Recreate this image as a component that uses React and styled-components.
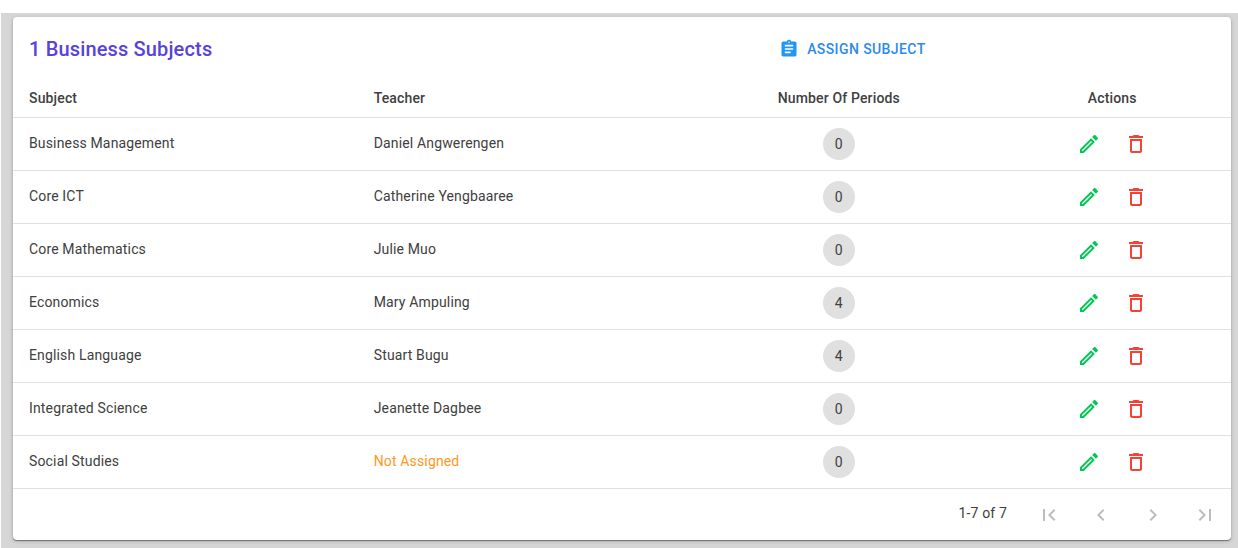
import React from "react";
import styled, { createGlobalStyle } from "styled-components";
import {
  MdAssignment,
  MdChevronLeft,
  MdChevronRight,
  MdDeleteOutline,
  MdFirstPage,
  MdLastPage,
  MdOutlineEdit,
} from "react-icons/md";

const GlobalStyle = createGlobalStyle`
  * {
    box-sizing: border-box;
  }
  body {
    margin: 0;
    background-color: #fff;
    color: #404040;
    font-family: Roboto, "Liberation Sans", sans-serif;
    font-size: 14px;
    line-height: 20px;
    letter-spacing: 0.01071em;
  }
`;

const Page = styled.main`
  margin: 13px 0 0 1px;
  padding: 4px 7px 8px 12px;
  background-color: #d6d6d6;
`;
const Card = styled.section`
  border-radius: 4px;
  background-color: #fff;
  box-shadow: 0 1px 1px rgba(0, 0, 0, 0.4), 0 1px 4px rgba(0, 0, 0, 0.2);
`;
const Header = styled.header`
  display: grid;
  grid-template-columns: 13fr 8fr;
  align-items: center;
  height: 63px;
  padding: 0 16px;
`;
const Title = styled.h1`
  margin: 0;
  color: #5742dc;
  font-size: 20px;
  font-weight: 500;
  line-height: 32px;
  letter-spacing: 0.0075em;
`;
const Button = styled.button`
  display: flex;
  align-items: center;
  justify-content: center;
  border: 0;
  background: none;
  color: inherit;
  font: inherit;
  letter-spacing: inherit;
  cursor: pointer;
`;
const AssignButton = styled(Button)`
  justify-self: start;
  gap: 8px;
  padding: 8px 16px;
  color: #2a8af0;
  font-weight: 500;
  letter-spacing: 0.02857em;
  text-transform: uppercase;
  & > svg {
    color: #2196f3;
  }
`;
const Table = styled.table`
  width: 100%;
  border-collapse: collapse;
  table-layout: fixed;
`;
const HeadCell = styled.th`
  width: ${(props) => props.$width};
  height: 37px;
  padding: 0 16px;
  border-bottom: 1px solid #e0e0e0;
  font-weight: 500;
  text-align: ${(props) => props.$align || "left"};
`;
const Cell = styled.td`
  height: 53px;
  padding: 0 16px;
  border-bottom: 1px solid #e0e0e0;
`;
const TextCell = styled(Cell)`
  padding-bottom: 2px;
  color: ${(props) => (props.$warning ? "#ff9820" : "inherit")};
`;
const Periods = styled.span`
  display: flex;
  align-items: center;
  justify-content: center;
  width: 32px;
  height: 32px;
  margin: 0 auto;
  border-radius: 50%;
  background-color: #e0e0e0;
`;
const Actions = styled.div`
  display: flex;
  justify-content: center;
  gap: 23px;
`;
const ActionButton = styled(Button)`
  width: 24px;
  height: 24px;
  padding: 0;
  color: ${(props) => props.$color};
`;
const Pagination = styled.footer`
  display: flex;
  align-items: center;
  justify-content: flex-end;
  height: 51px;
  padding-top: 1px;
`;
const Range = styled.span`
  margin-right: 16px;
  padding-bottom: 4px;
`;
const PageButton = styled(Button)`
  width: 52px;
  height: 48px;
  padding: 0;
  color: #bdbdbd;
`;

const subjects = [
  { name: "Business Management", teacher: "Daniel Angwerengen", periods: 0 },
  { name: "Core ICT", teacher: "Catherine Yengbaaree", periods: 0 },
  { name: "Core Mathematics", teacher: "Julie Muo", periods: 0 },
  { name: "Economics", teacher: "Mary Ampuling", periods: 4 },
  { name: "English Language", teacher: "Stuart Bugu", periods: 4 },
  { name: "Integrated Science", teacher: "Jeanette Dagbee", periods: 0 },
  { name: "Social Studies", teacher: null, periods: 0 },
];

const SubjectRow = ({ name, teacher, periods }) => (
  <tr>
    <TextCell>{name}</TextCell>
    <TextCell $warning={!teacher}>{teacher || "Not Assigned"}</TextCell>
    <Cell>
      <Periods>{periods}</Periods>
    </Cell>
    <Cell>
      <Actions>
        <ActionButton type="button" $color="#00c853" aria-label={`Edit ${name}`}>
          <MdOutlineEdit size={24} />
        </ActionButton>
        <ActionButton type="button" $color="#f44336" aria-label={`Delete ${name}`}>
          <MdDeleteOutline size={24} />
        </ActionButton>
      </Actions>
    </Cell>
  </tr>
);

const App = () => (
  <>
    <GlobalStyle />
    <Page>
      <Card>
        <Header>
          <Title>1 Business Subjects</Title>
          <AssignButton type="button">
            <MdAssignment size={20} />
            Assign Subject
          </AssignButton>
        </Header>
        <Table>
          <thead>
            <tr>
              <HeadCell $width="28.3%">Subject</HeadCell>
              <HeadCell $width="26.8%">Teacher</HeadCell>
              <HeadCell $width="25.4%" $align="center">
                Number Of Periods
              </HeadCell>
              <HeadCell $width="19.5%" $align="center">
                Actions
              </HeadCell>
            </tr>
          </thead>
          <tbody>
            {subjects.map((subject) => (
              <SubjectRow key={subject.name} {...subject} />
            ))}
          </tbody>
        </Table>
        <Pagination>
          <Range>1-7 of 7</Range>
          <PageButton type="button" aria-label="First page">
            <MdFirstPage size={24} />
          </PageButton>
          <PageButton type="button" aria-label="Previous page">
            <MdChevronLeft size={24} />
          </PageButton>
          <PageButton type="button" aria-label="Next page">
            <MdChevronRight size={24} />
          </PageButton>
          <PageButton type="button" aria-label="Last page">
            <MdLastPage size={24} />
          </PageButton>
        </Pagination>
      </Card>
    </Page>
  </>
);

export default App;
